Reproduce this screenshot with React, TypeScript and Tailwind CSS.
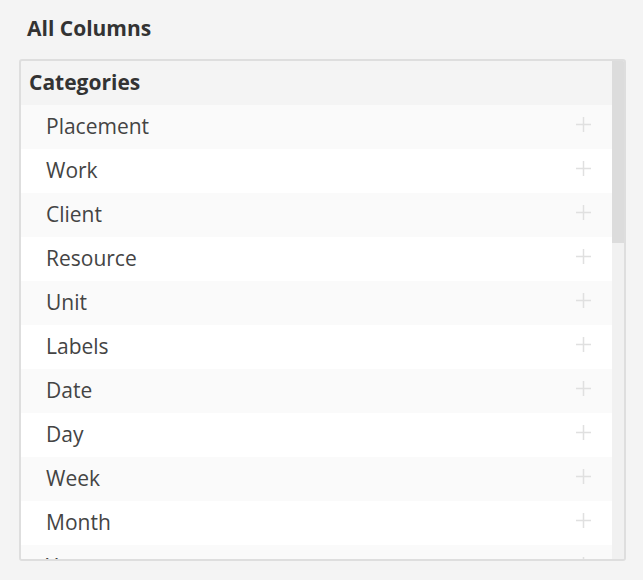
const ROWS = [
  "Placement",
  "Work",
  "Client",
  "Resource",
  "Unit",
  "Labels",
  "Date",
  "Day",
  "Week",
  "Month",
  "Year",
];

function Plus() {
  return (
    <svg width="15" height="15" viewBox="0 0 15 15" className="mb-[5px]" aria-hidden="true">
      <path d="M7.5 0v15M0 7.5h15" stroke="#e0e0e0" strokeWidth="1.5" fill="none" />
    </svg>
  );
}

export default function App() {
  return (
    <div
      className="h-[580px] w-[643px] overflow-hidden bg-[#f4f4f4] pl-[19px] pr-[17px] pt-[15px]"
      style={{ fontFamily: '"Open Sans", sans-serif' }}
    >
      <h1 className="pl-2 text-[21px] font-bold leading-[26px] text-[#333]">All Columns</h1>
      <div className="mt-[18px] flex h-[502px] overflow-hidden rounded-[3px] border-2 border-[#dedede] bg-[#f4f4f4]">
        <div className="flex-1 overflow-hidden">
          <div className="flex h-[44px] items-center px-2 text-[21px] font-bold text-[#333]">
            Categories
          </div>
          {ROWS.map((r, i) => (
            <div
              key={r}
              className={`flex h-[44px] shrink-0 items-center justify-between pl-[25px] pr-[21px] text-[21px] text-[#444] ${
                i % 2 === 0 ? "bg-[#fafafa]" : "bg-white"
              }`}
            >
              <span>{r}</span>
              <Plus />
            </div>
          ))}
        </div>
        <div className="w-[12px] bg-[#f1f1f1]">
          <div className="h-[182px] bg-[#dcdcdc]" />
        </div>
      </div>
    </div>
  );
}
